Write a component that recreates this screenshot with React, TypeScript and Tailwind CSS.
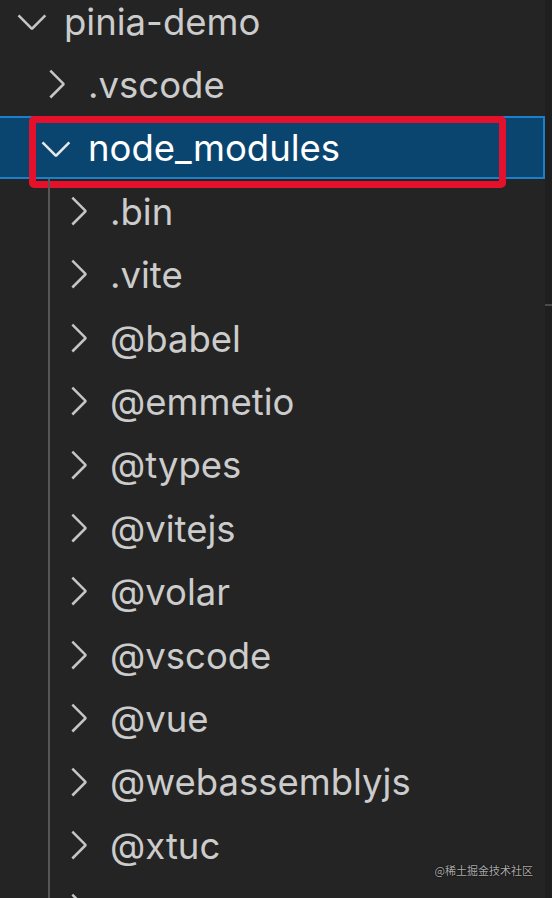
import React from 'react';

type Node = { name: string; level: 0 | 1 | 2; open?: boolean; selected?: boolean };

const tree: Node[] = [
  { name: 'pinia-demo', level: 0, open: true },
  { name: '.vscode', level: 1 },
  { name: 'node_modules', level: 1, open: true, selected: true },
  { name: '.bin', level: 2 },
  { name: '.vite', level: 2 },
  { name: '@babel', level: 2 },
  { name: '@emmetio', level: 2 },
  { name: '@types', level: 2 },
  { name: '@vitejs', level: 2 },
  { name: '@volar', level: 2 },
  { name: '@vscode', level: 2 },
  { name: '@vue', level: 2 },
  { name: '@webassemblyjs', level: 2 },
  { name: '@xtuc', level: 2 },
  // next row is cut off by the bottom edge, only its chevron peeks in
  { name: '', level: 2 },
];

// codicon chevrons, 16px grid
const Chevron = ({ open, color }: { open?: boolean; color: string }) => (
  <svg viewBox="0 0 16 16" className="w-[46px] h-[46px] shrink-0" fill={color}>
    {open ? (
      <path d="M7.976 10.072l4.357-4.357.62.618L8.284 11h-.618L3 6.333l.619-.618 4.357 4.357z" />
    ) : (
      <path d="M10.072 8.024L5.715 3.667l.618-.62L11 7.716v.618L6.333 13l-.618-.619 4.357-4.357z" />
    )}
  </svg>
);

function Row({ node }: { node: Node }) {
  const textColor = node.selected ? 'text-white' : 'text-[#cccccc]';
  return (
    <div
      className={
        'relative shrink-0 flex items-center h-[63.4px] ' +
        (node.selected ? 'bg-[#0a4570] border-2 border-[#1b7fc9] -ml-[4px]' : '')
      }
    >
      {node.level === 0 && <div className="w-[9px] shrink-0" />}
      {node.level === 1 && <div className={node.selected ? 'w-[35px] shrink-0' : 'w-[33px] shrink-0'} />}
      {node.level === 2 && (
        <>
          <div className="w-[48px] shrink-0" />
          <div className="w-[2px] self-stretch bg-[#565656] shrink-0" />
          <div className="w-[5px] shrink-0" />
        </>
      )}
      <Chevron open={node.open} color={node.selected ? '#e6e6e6' : '#c5c5c5'} />
      {node.name && (
        <span className={'ml-[9px] text-[36.5px] leading-none whitespace-nowrap pt-[2px] ' + textColor}>
          {node.name}
        </span>
      )}
      {node.selected && (
        <div className="absolute left-[31px] top-[-2px] w-[477px] h-[72px] border-[7px] border-[#e5102c] rounded-[5px]" />
      )}
    </div>
  );
}

export default function App() {
  return (
    <div
      className="relative w-[552px] h-[898px] overflow-hidden bg-[#242424] flex"
      style={{ fontFamily: 'Inter, "Noto Sans", sans-serif' }}
    >
      <div className="flex-1 flex flex-col mt-[-10.8px]">
        {tree.map((n, i) => (
          <Row key={i} node={n} />
        ))}
      </div>
      <div className="w-[7px] shrink-0 bg-[#1f1f1f] flex flex-col">
        <div className="h-[304px]" />
        <div className="h-[2px] bg-[#4a4a4a]" />
      </div>
      <div
        className="absolute right-[19px] top-[865px] text-[11px] text-[#a8a8a8] leading-none"
        style={{ fontFamily: '"Noto Sans CJK SC", sans-serif', textShadow: '0 0 2px #000' }}
      >
        @稀土掘金技术社区
      </div>
    </div>
  );
}
